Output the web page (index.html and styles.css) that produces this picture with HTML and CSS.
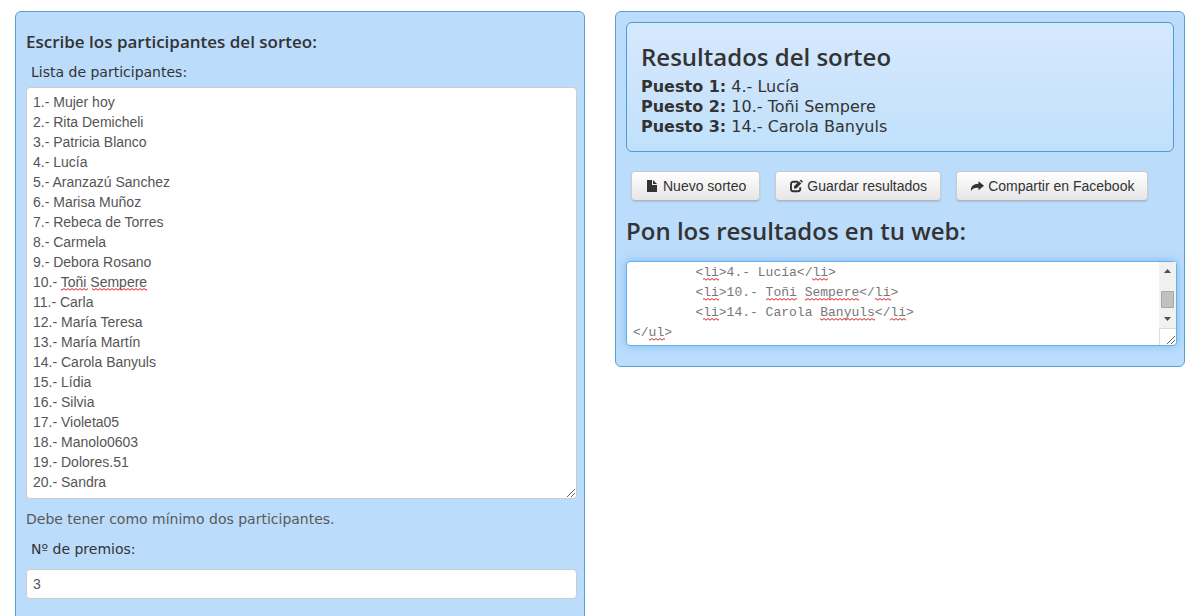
FILE: index.html
```html
<!DOCTYPE html>
<html lang="es">
<head>
<meta charset="utf-8">
<title>Sorteo</title>
<link rel="stylesheet" href="styles.css">
</head>
<body>
<main class="page">
  <section class="panel panel-form">
    <h2 class="form-title">Escribe los participantes del sorteo:</h2>
    <label class="field-label" for="participants">Lista de participantes:</label>
    <div class="field">
      <textarea class="control control-list" id="participants" rows="20" spellcheck="false">1.- Mujer hoy
2.- Rita Demicheli
3.- Patricia Blanco
4.- Lucía
5.- Aranzazú Sanchez
6.- Marisa Muñoz
7.- Rebeca de Torres
8.- Carmela
9.- Debora Rosano
10.- Toñi Sempere
11.- Carla
12.- María Teresa
13.- María Martín
14.- Carola Banyuls
15.- Lídia
16.- Silvia
17.- Violeta05
18.- Manolo0603
19.- Dolores.51
20.- Sandra</textarea>
      <svg class="marks" aria-hidden="true">
        <defs>
          <pattern id="wave" width="4" height="4" patternUnits="userSpaceOnUse">
            <path d="M-1 2.500L0 3.200L2 1.500L4 3.200L5 2.500" fill="none" stroke="#e02020" stroke-width="1"/>
          </pattern>
        </defs>
        <rect x="35" y="200" width="27" height="4" fill="url(#wave)"/>
        <rect x="66" y="200" width="55" height="4" fill="url(#wave)"/>
      </svg>
      <svg class="grip" viewBox="0 0 10 10" aria-hidden="true"><path d="M1 9 L9 1 M5 9 L9 5"/></svg>
    </div>
    <p class="help">Debe tener como mínimo dos participantes.</p>
    <label class="field-label label-prizes" for="prizes">Nº de premios:</label>
    <input class="control control-line" id="prizes" type="text" value="3">
  </section>

  <section class="panel">
    <div class="results">
      <h2 class="title">Resultados del sorteo</h2>
      <p class="place"><strong>Puesto 1:</strong> 4.- Lucía</p>
      <p class="place"><strong>Puesto 2:</strong> 10.- Toñi Sempere</p>
      <p class="place"><strong>Puesto 3:</strong> 14.- Carola Banyuls</p>
    </div>
    <div class="actions">
      <button class="btn" type="button">
        <svg class="icon" viewBox="0 0 14 14" aria-hidden="true"><path d="M2 1h5v5h5v7H2z M8 1l4 4H8z"/></svg>Nuevo sorteo
      </button>
      <button class="btn" type="button">
        <svg class="icon" viewBox="0 0 14 14" aria-hidden="true"><path d="M9 2.700H4.200A2.200 2.200 0 0 0 2 4.900V10a2.200 2.200 0 0 0 2.200 2.200H9A2.200 2.200 0 0 0 11.200 10V8.300" fill="none" stroke="#333" stroke-width="1.900"/><path d="M5 7.200l5-5 2.300 2.300-5 5H5z M10.700 1.500l.6-.6q.5-.4 1 0l1.300 1.300q.4.5 0 1l-.6.600z"/></svg>Guardar resultados
      </button>
      <button class="btn" type="button">
        <svg class="icon" viewBox="0 0 14 14" aria-hidden="true"><path d="M8.500 2.200L14 6.700 8.500 11.200V8.800C5 8.600 2.600 9.200 1 12 .4 7.500 3.500 4.800 8.500 4.700z"/></svg>Compartir en Facebook
      </button>
    </div>
    <h2 class="title"><label for="code">Pon los resultados en tu web:</label></h2>
    <div class="field field-code">
      <textarea class="control control-code" id="code" rows="4" spellcheck="false">
        &lt;li&gt;4.- Lucía&lt;/li&gt;
        &lt;li&gt;10.- Toñi Sempere&lt;/li&gt;
        &lt;li&gt;14.- Carola Banyuls&lt;/li&gt;
&lt;/ul&gt;</textarea>
      <svg class="marks" aria-hidden="true">
        <g fill="url(#wave)">
          <rect x="77" y="16" width="16" height="4"/><rect x="186" y="16" width="16" height="4"/>
          <rect x="77" y="36" width="16" height="4"/><rect x="140" y="36" width="31" height="4"/>
          <rect x="179" y="36" width="54" height="4"/><rect x="249" y="36" width="16" height="4"/>
          <rect x="77" y="56" width="16" height="4"/><rect x="194" y="56" width="55" height="4"/>
          <rect x="264" y="56" width="16" height="4"/><rect x="23" y="76" width="16" height="4"/>
        </g>
      </svg>
      <svg class="scroll" viewBox="0 0 17 83" aria-hidden="true">
        <path d="M0 0h17v66H0z" fill="#f1f1f1"/>
        <path d="M5 11l3.500-4 3.500 4z M5 55l3.500 4 3.500-4z" fill="#505050"/>
        <path d="M2.500 29.500h12v16h-12z" fill="#c1c1c1" stroke="#a8a8a8"/>
        <path d="M.5 83V66.500H17" fill="none" stroke="#dcdcdc"/>
      </svg>
      <svg class="grip" viewBox="0 0 10 10" aria-hidden="true"><path d="M1 9 L9 1 M5 9 L9 5"/></svg>
    </div>
  </section>
</main>
</body>
</html>
```
FILE: styles.css
```css
* {
  box-sizing: border-box;
}

body {
  margin: 0;
  background: #fff;
  color: #333;
  font: 14px/20px Verdana, "DejaVu Sans", sans-serif;
}

.page {
  display: grid;
  grid-template-columns: 1fr 1fr;
  align-items: start;
  gap: 30px;
  height: 100vh;
  overflow: hidden;
  padding: 11px 14px 0 15px;
}

.panel {
  min-width: 0;
  padding: 10px 10px 20px;
  border: 1px solid #5ba3cf;
  border-radius: 6px;
  background: #bbdcfb;
}

.panel-form {
  padding-bottom: 50px;
}

.form-title,
.title {
  margin: 0;
  font-family: "Trebuchet MS", "Open Sans", sans-serif;
  font-weight: 600;
}

.form-title {
  margin: 10px 0;
  font-size: 17px;
  line-height: 20px;
}

.title {
  font-size: 24px;
  line-height: 40px;
}

.field-label {
  display: block;
  margin: 0 5px 5px;
}

.label-prizes {
  margin-bottom: 10px;
}

.field {
  position: relative;
  width: calc(100% + 3px);
}

.field-code {
  margin-top: 10px;
}

.control {
  display: block;
  width: 100%;
  margin: 0;
  padding: 4px 6px;
  border: 1px solid #ccc;
  border-radius: 4px;
  outline: 0;
  background: #fff;
  color: #555;
  font: 14px/20px Arial, "Liberation Sans", sans-serif;
  resize: none;
  overflow: hidden;
}

.control-list {
  padding-bottom: 6px;
}

.control-line {
  width: calc(100% + 3px);
}

.control-code {
  padding: 1px 6px 2px;
  border-color: #66afe9;
  box-shadow: 0 0 8px rgba(82, 168, 236, 0.6);
  color: #777;
  font: 13px/20px "Courier New", "Liberation Mono", monospace;
  white-space: pre;
}

.marks {
  position: absolute;
  inset: 0;
  width: 100%;
  height: 100%;
  pointer-events: none;
}

.scroll {
  position: absolute;
  top: 1px;
  right: 1px;
  width: 17px;
  height: 83px;
}

.grip {
  position: absolute;
  right: 1px;
  bottom: 1px;
  width: 10px;
  height: 10px;
  fill: none;
  stroke: #666;
}

.help {
  margin: 10px 0;
  color: #595959;
}

.results {
  padding: 14px;
  border: 1px solid #4f9bd5;
  border-radius: 6px;
  background: linear-gradient(#d6e9fd, #cce4fc 50%, #c0e1fb);
}

.place {
  margin: 0;
  font-size: 16px;
}

.actions {
  display: flex;
  flex-wrap: wrap;
  gap: 15px;
  margin: 19px 5px 10px;
}

.btn {
  display: flex;
  align-items: center;
  gap: 4px;
  padding: 4px 13px;
  border: 1px solid #ccc;
  border-bottom-color: #b3b3b3;
  border-radius: 4px;
  background: linear-gradient(#fff, #e6e6e6);
  box-shadow: 0 1px 2px rgba(0, 0, 0, 0.1);
  color: #333;
  font: 14px/20px Arial, "Liberation Sans", sans-serif;
}

.icon {
  width: 14px;
  height: 14px;
  fill: #333;
}
```
